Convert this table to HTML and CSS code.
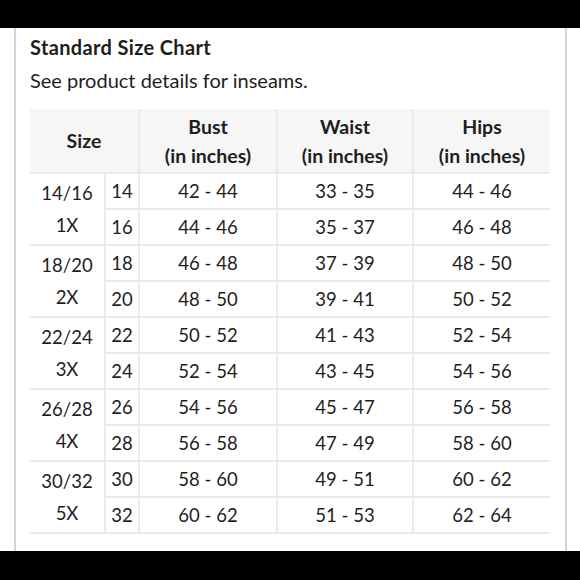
FILE: index.html
```html
<!DOCTYPE html>
<html>
<head>
<meta charset="utf-8">
<link rel="stylesheet" href="styles.css">
</head>
<body>
<div class="bar top"></div>
<div class="frame">
  <div class="content">
    <h1 class="title">Standard Size Chart</h1>
    <p class="sub">See product details for inseams.</p>
    <table class="chart">
      <thead>
        <tr>
          <th colspan="2" class="size-h">Size</th>
          <th>Bust<br>(in inches)</th>
          <th>Waist<br>(in inches)</th>
          <th>Hips<br>(in inches)</th>
        </tr>
      </thead>
      <tbody>
        <tr><td rowspan="2" class="grp">14/16<br>1X</td><td class="num">14</td><td>42 - 44</td><td>33 - 35</td><td>44 - 46</td></tr>
        <tr><td class="num">16</td><td>44 - 46</td><td>35 - 37</td><td>46 - 48</td></tr>
        <tr><td rowspan="2" class="grp">18/20<br>2X</td><td class="num">18</td><td>46 - 48</td><td>37 - 39</td><td>48 - 50</td></tr>
        <tr><td class="num">20</td><td>48 - 50</td><td>39 - 41</td><td>50 - 52</td></tr>
        <tr><td rowspan="2" class="grp">22/24<br>3X</td><td class="num">22</td><td>50 - 52</td><td>41 - 43</td><td>52 - 54</td></tr>
        <tr><td class="num">24</td><td>52 - 54</td><td>43 - 45</td><td>54 - 56</td></tr>
        <tr><td rowspan="2" class="grp">26/28<br>4X</td><td class="num">26</td><td>54 - 56</td><td>45 - 47</td><td>56 - 58</td></tr>
        <tr><td class="num">28</td><td>56 - 58</td><td>47 - 49</td><td>58 - 60</td></tr>
        <tr><td rowspan="2" class="grp">30/32<br>5X</td><td class="num">30</td><td>58 - 60</td><td>49 - 51</td><td>60 - 62</td></tr>
        <tr><td class="num">32</td><td>60 - 62</td><td>51 - 53</td><td>62 - 64</td></tr>
      </tbody>
    </table>
  </div>
</div>
<div class="bar bottom"></div>
</body>
</html>
```
FILE: styles.css
```css
html, body {
  margin: 0;
  padding: 0;
  background: #fff;
}
body {
  width: 580px;
  height: 580px;
  overflow: hidden;
  font-family: "Lato", "Noto Sans", sans-serif;
  color: #1e1e1e;
}
.bar {
  background: #000;
}
.bar.top {
  height: 28px;
}
.bar.bottom {
  height: 29px;
}
.frame {
  height: 523px;
  margin-left: 14px;
  width: 549px;
  border-left: 2px solid #d4d4d4;
  border-right: 2px solid #d4d4d4;
}
.content {
  padding: 7px 0 0 14px;
}
.title {
  margin: 0;
  font-size: 20px;
  font-weight: 700;
  line-height: 24px;
  letter-spacing: 0.35px;
}
.sub {
  margin: 8px 0 0 0;
  font-size: 20px;
  line-height: 26px;
}
.chart {
  margin-top: 16px;
  width: 520px;
  border-collapse: collapse;
  font-size: 18.5px;
  text-align: center;
}
.chart th {
  background: #f6f6f6;
  font-size: 19.5px;
  font-weight: 700;
  line-height: 29px;
  height: 63px;
  padding: 0;
  border-left: 2px solid #ebebeb;
  border-bottom: 2px solid #ebebeb;
}
.chart th:first-child {
  border-left: none;
}
.chart th.size-h {
  width: 108px;
}
.chart td {
  height: 34px;
  padding: 0;
  line-height: 32px;
  border-left: 2px solid #ebebeb;
  border-bottom: 2px solid #ebebeb;
}
.chart td.grp {
  border-left: none;
  width: 74px;
}
.chart td.num {
  width: 32px;
}
.chart td:nth-last-child(3) {
  width: 136px;
}
.chart td:nth-last-child(2) {
  width: 134px;
}
```
